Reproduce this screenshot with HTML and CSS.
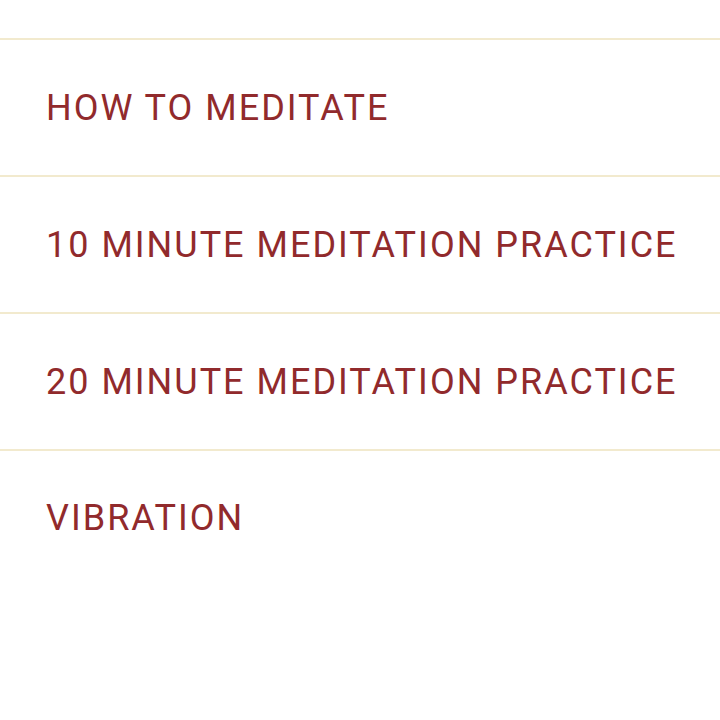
FILE: index.html
```html
<!DOCTYPE html>
<html lang="en">
<head>
  <meta charset="UTF-8" />
  <meta name="viewport" content="width=device-width, initial-scale=1.0"/>
  <title>Meditation</title>
  <link rel="stylesheet" href="styles.css">
</head>
<body>

<nav class="menu">
  <ul>
    <li><a href="#">How to meditate</a></li>
    <li><a href="#">10 minute meditation practice</a></li>
    <li><a href="#">20 minute meditation practice</a></li>
    <li><a href="#">Vibration</a></li>
  </ul>
</nav>

</body>
</html>
```

FILE: styles.css
```css
body {
  margin: 0;
  font-family: Roboto, 'Noto Sans', sans-serif;
  background: #fff;
}
.menu ul {
  list-style: none;
  margin: 38px 0 0;
  padding: 0;
}
.menu li {
  border-top: 2px solid #f2eace;
  height: 135px;
  display: flex;
  align-items: center;
  padding-left: 46px;
}
.menu li:last-child {
  height: 133px;
}
.menu a {
  color: #912a2c;
  text-decoration: none;
  text-transform: uppercase;
  font-size: 36px;
  letter-spacing: 2px;
}
```
